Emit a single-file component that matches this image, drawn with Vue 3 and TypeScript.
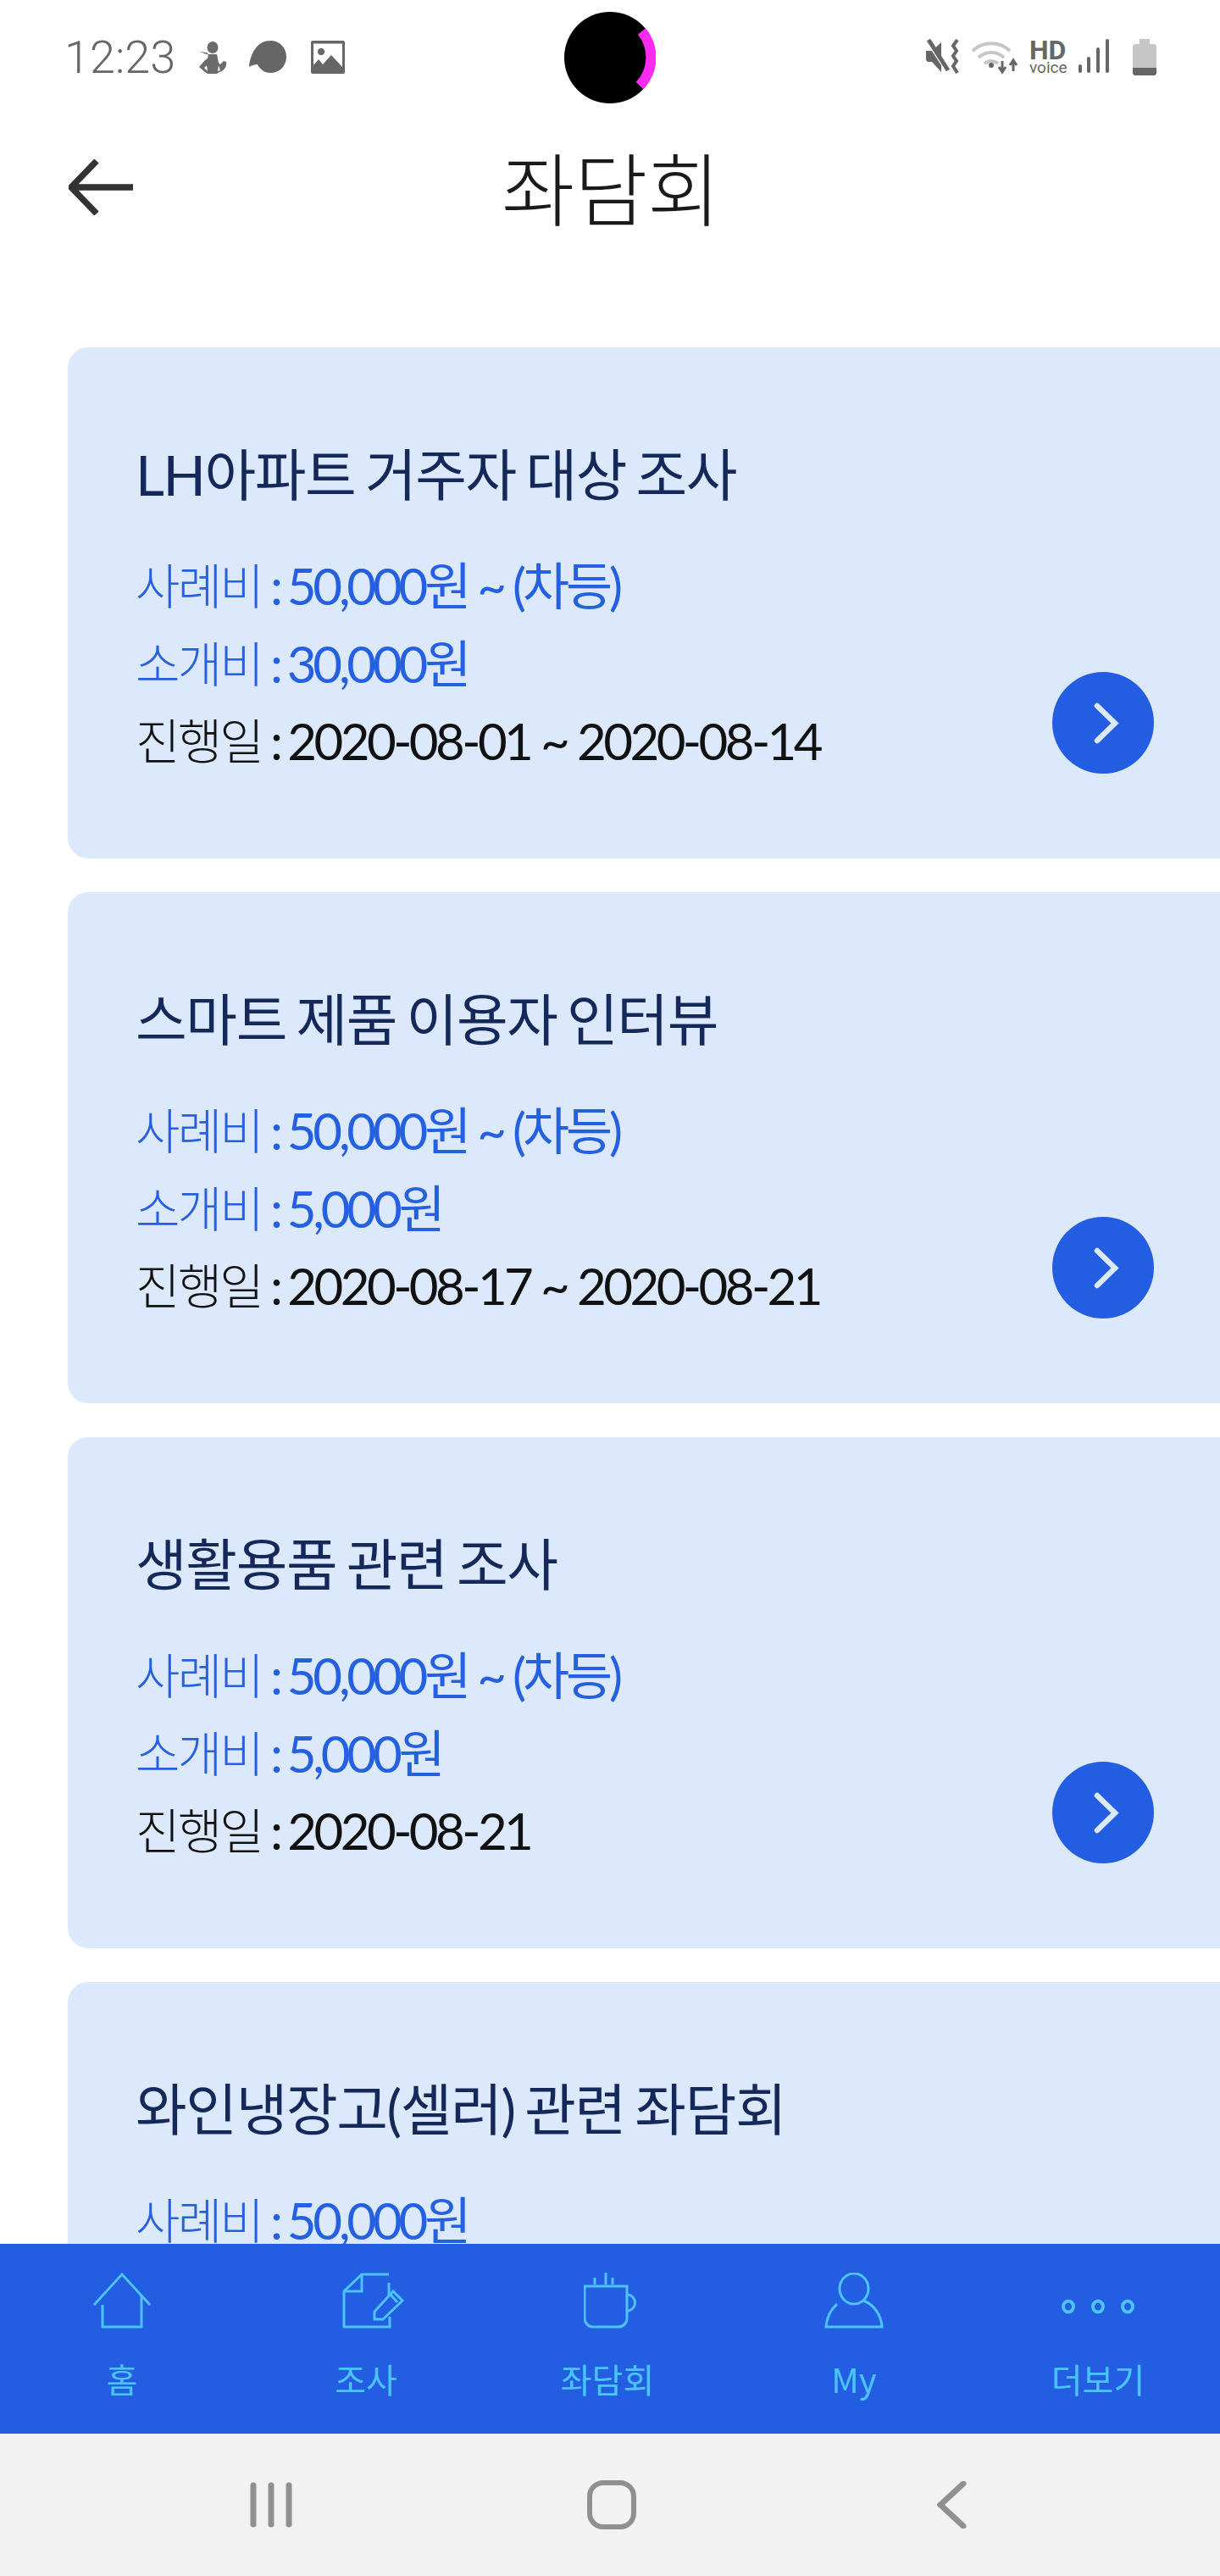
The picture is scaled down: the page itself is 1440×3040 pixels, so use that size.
<script setup lang="ts">
interface Row {
  label: string;
  value: string;
  dark?: boolean;
}

interface Meeting {
  title: string;
  rows: Row[];
}

const meetings: Meeting[] = [
  {
    title: 'LH아파트 거주자 대상 조사',
    rows: [
      { label: '사례비', value: '50,000원 ~ (차등)' },
      { label: '소개비', value: '30,000원' },
      { label: '진행일', value: '2020-08-01 ~ 2020-08-14', dark: true },
    ],
  },
  {
    title: '스마트 제품 이용자 인터뷰',
    rows: [
      { label: '사례비', value: '50,000원 ~ (차등)' },
      { label: '소개비', value: '5,000원' },
      { label: '진행일', value: '2020-08-17 ~ 2020-08-21', dark: true },
    ],
  },
  {
    title: '생활용품 관련 조사',
    rows: [
      { label: '사례비', value: '50,000원 ~ (차등)' },
      { label: '소개비', value: '5,000원' },
      { label: '진행일', value: '2020-08-21', dark: true },
    ],
  },
  {
    title: '와인냉장고(셀러) 관련 좌담회',
    rows: [{ label: '사례비', value: '50,000원' }],
  },
];
</script>

<template>
  <div class="phone">
    <div class="status-bar">
      <div class="status-left">
        <span class="clock">12:23</span>
        <svg class="st-person" width="36" height="40" viewBox="0 0 36 40">
          <ellipse cx="18" cy="7" rx="6.5" ry="7" fill="#6b6b6b" />
          <path d="M2 12l12 4-3-3z" fill="#6b6b6b" />
          <path d="M13 15h10l2 10 2 2 4-4 3 1c1 6-3 11-8 12l-3 2H12l-3-2-7-6 7-8 3-2z" fill="#6b6b6b" />
          <path d="M11 28l-3 3 4 4zM25 28l2 6-3 1z" fill="#fff" />
        </svg>
        <svg class="st-bubble" width="44" height="38" viewBox="0 0 44 38">
          <path d="M0 31C1 18 8 0 25 0c11 0 19 8 19 19s-8 19-19 19c-7 0-12-4-15-10-3 0-7 1-10 3z" fill="#666" />
        </svg>
        <svg class="st-image" width="40" height="39" viewBox="0 0 40 39">
          <rect width="40" height="39" rx="2" fill="#666" />
          <rect x="3" y="3.500" width="34" height="32" fill="#fff" />
          <circle cx="12" cy="13" r="4" fill="#666" />
          <path d="M3 29l6-7 5 6 10-11 13 14v8H3z" fill="#666" />
        </svg>
      </div>
      <div class="status-right">
        <svg width="41" height="41" viewBox="0 0 41 41">
          <path d="M0 14h7L18 4v35L7 27H2l-2-2z" fill="#666" />
          <path d="M2 2l24 37" stroke="#fff" stroke-width="5" />
          <path d="M3 1l23 36" stroke="#666" stroke-width="5" />
          <path d="M37 1l-5 7 4 6-4 6 4 6-4 6 5 8" fill="none" stroke="#666" stroke-width="4" />
        </svg>
        <svg width="57" height="42" viewBox="0 0 57 42">
          <g fill="none" stroke="#c6c6c6" stroke-width="4">
            <path d="M2 14a32 32 0 0 1 44 0" />
            <path d="M9 22a22 22 0 0 1 30 0" />
            <path d="M16 29a12 12 0 0 1 16 0" />
          </g>
          <circle cx="24" cy="31" r="3" fill="#666" />
          <path d="M37 26v10M33 33l4 6 4-6M50 38V28M46 31l4-6 4 6" fill="none" stroke="#666" stroke-width="3" />
        </svg>
        <div class="hd">
          <span class="hd-big">HD</span>
          <span class="hd-small">voice</span>
        </div>
        <svg width="36" height="40" viewBox="0 0 36 40">
          <g fill="#666">
            <rect x="0" y="30" width="4" height="10" rx="2" />
            <rect x="10" y="21" width="4" height="19" rx="2" />
            <rect x="21" y="10" width="4" height="30" rx="2" />
            <rect x="32" y="0" width="4" height="40" rx="2" />
          </g>
        </svg>
        <svg class="st-battery" width="28" height="43" viewBox="0 0 28 43">
          <path d="M8 0h12v6h6l2 2v27H0V8l2-2h6z" fill="#c6c6c6" />
          <path d="M0 34h28v7l-2 2H2l-2-2z" fill="#666" />
        </svg>
      </div>
      <svg class="camera" width="108" height="108" viewBox="0 0 108 108">
        <circle cx="54" cy="54" r="54" fill="#000" />
        <path d="M91.500 23A48.500 48.500 0 0 1 89 87" fill="none" stroke="#ff2bf0" stroke-width="12" />
      </svg>
    </div>

    <header class="top-bar">
      <svg class="back" width="80" height="66" viewBox="0 0 80 66">
        <path d="M33 2L3 33l30 31M4 33h72" fill="none" stroke="#333" stroke-width="7.500" />
      </svg>
      <h1 class="page-title">좌담회</h1>
    </header>

    <main class="list">
      <section v-for="m in meetings" :key="m.title" class="card">
        <div class="card-text">
          <h2 class="card-title">{{ m.title }}</h2>
          <p v-for="r in m.rows" :key="r.label" class="row" :class="{ dark: r.dark }">
            <span class="row-label">{{ r.label }}</span><span class="row-colon">:</span><span class="row-value">{{ r.value }}</span>
          </p>
        </div>
        <button class="go" type="button" aria-label="상세">
          <svg width="120" height="120" viewBox="0 0 120 120">
            <path d="M53 40l21 20.500L53 81" fill="none" stroke="#dce9fd" stroke-width="6.500" stroke-linecap="round" />
          </svg>
        </button>
      </section>
    </main>

    <nav class="tabs">
      <div class="tab">
        <svg class="tab-icon" width="70" height="66" viewBox="0 0 70 66">
          <path d="M2 38L35 2l33 36" fill="none" stroke="#4cc4fb" stroke-width="3" />
          <path d="M12 38v26h46V27" fill="none" stroke="#4cc4fb" stroke-width="3" />
        </svg>
        <span>홈</span>
      </div>
      <div class="tab">
        <svg class="tab-icon survey-icon" width="74" height="66" viewBox="0 0 74 66">
          <g fill="none" stroke="#4cc4fb" stroke-width="3">
            <path d="M55 2H23L2 22v42h54V52" />
            <path d="M23 2v20H2" />
            <path d="M55 12v16" />
            <path d="M38 46l22-24 11 11-23 22H38z" />
            <path d="M57 26l8 9" />
          </g>
        </svg>
        <span>조사</span>
      </div>
      <div class="tab">
        <svg class="tab-icon" width="62" height="66" viewBox="0 0 62 66">
          <g fill="none" stroke="#4cc4fb" stroke-width="3">
            <path d="M1 16h50v38a10 10 0 0 1-10 10H11A10 10 0 0 1 1 54z" />
            <path d="M51 26a9 9 0 0 1 0 19" />
            <path d="M13 6v8M26 0v14M34 6v8" />
          </g>
        </svg>
        <span class="meeting-label">좌담회</span>
      </div>
      <div class="tab">
        <svg class="tab-icon" width="70" height="66" viewBox="0 0 70 66">
          <g fill="none" stroke="#4cc4fb" stroke-width="3">
            <ellipse cx="35" cy="19" rx="17" ry="18" />
            <path d="M15 37C7 44 3 52 2 64h66c-1-14-9-26-22-31" />
          </g>
        </svg>
        <span>My</span>
      </div>
      <div class="tab">
        <svg class="tab-icon" width="88" height="66" viewBox="0 0 88 66">
          <g fill="none" stroke="#4cc4fb" stroke-width="4">
            <ellipse cx="9" cy="40" rx="6" ry="6.500" />
            <ellipse cx="44" cy="40" rx="6" ry="6.500" />
            <ellipse cx="79" cy="40" rx="6" ry="6.500" />
          </g>
        </svg>
        <span>더보기</span>
      </div>
    </nav>

    <footer class="system-nav">
      <svg width="50" height="54" viewBox="0 0 50 54">
        <path d="M4 4v46M25 4v46M46 4v46" stroke="#909090" stroke-width="7" stroke-linecap="round" />
      </svg>
      <svg width="58" height="58" viewBox="0 0 58 58">
        <rect x="3" y="3" width="52" height="52" rx="16" fill="none" stroke="#909090" stroke-width="6" />
      </svg>
      <svg width="36" height="56" viewBox="0 0 36 56">
        <path d="M31 3L4 28l27 25" fill="none" stroke="#909090" stroke-width="7" stroke-linecap="round" />
      </svg>
    </footer>
  </div>
</template>

<style>
html,
body {
  margin: 0;
  background: #fff;
  overflow: hidden;
}
</style>

<style scoped>
.phone {
  width: 1440px;
  height: 3040px;
  display: flex;
  flex-direction: column;
  overflow: hidden;
  background: #fff;
  font-family: Lato, "Noto Sans CJK KR", sans-serif;
}
.status-bar {
  position: relative;
  flex: none;
  height: 136px;
  display: flex;
  justify-content: space-between;
  padding: 46px 75px 0 76px;
  box-sizing: border-box;
}
.status-left,
.status-right {
  display: flex;
  align-items: flex-start;
}
.clock {
  font-family: Roboto, sans-serif;
  font-weight: 300;
  font-size: 54px;
  line-height: 44px;
  color: #666;
}
.st-person { margin: 3px 0 0 26px; }
.st-bubble { margin: 2px 0 0 25px; }
.st-image { margin: 2px 0 0 29px; }
.status-right { gap: 12px; }
.hd {
  display: flex;
  flex-direction: column;
  width: 46px;
  font-family: Roboto, sans-serif;
  color: #666;
  line-height: 1;
}
.hd-big {
  font-size: 32px;
  font-weight: 700;
  height: 24px;
  margin-top: 1px;
  line-height: 24px;
}
.hd-small {
  font-size: 19px;
  line-height: 18px;
}
.st-battery { margin-left: 16px; }
.camera {
  position: absolute;
  left: 666px;
  top: 14px;
}
.top-bar {
  position: relative;
  flex: none;
  height: 274px;
  box-sizing: border-box;
  padding: 23px 0 0 2px;
  text-align: center;
}
.back {
  position: absolute;
  left: 81px;
  top: 52px;
}
.page-title {
  margin: 0;
  font-family: "Noto Sans CJK KR", sans-serif;
  font-weight: 300;
  font-size: 94px;
  line-height: 120px;
  letter-spacing: -0.5px;
  color: #1a1a1a;
}
.list {
  flex: 1;
  min-height: 0;
  overflow: hidden;
  padding-left: 80px;
  display: flex;
  flex-direction: column;
  gap: 40px;
}
.card {
  flex: none;
  height: 603px;
  box-sizing: border-box;
  display: flex;
  justify-content: space-between;
  padding: 104px 78px 100px 80px;
  background: #dce9fd;
  border-radius: 24px 0 0 24px;
}
.card-title {
  margin: 0 0 40px;
  font-weight: 400;
  font-size: 66px;
  line-height: 92px;
  letter-spacing: -1.4px;
  word-spacing: -4px;
  color: #14285a;
}
.row {
  margin: 0;
  display: flex;
  font-size: 60px;
  line-height: 91.500px;
  letter-spacing: -4.200px;
  color: #2560e0;
  white-space: pre;
}
.row.dark {
  color: #111;
  letter-spacing: -3.600px;
}
.row-label {
  font-weight: 300;
  font-size: 57px;
  letter-spacing: -2.800px;
}
.row-colon {
  margin: 0 9px 0 10px;
}
.go {
  align-self: flex-end;
  flex: none;
  width: 120px;
  height: 120px;
  padding: 0;
  border: 0;
  border-radius: 50%;
  background: #235de2;
}
.go svg { display: block; }
.tabs {
  flex: none;
  height: 224px;
  display: grid;
  grid-template-columns: repeat(5, 1fr);
  background: #235de2;
}
.tab {
  display: flex;
  flex-direction: column;
  align-items: center;
  padding-top: 34px;
  font-family: "Noto Sans CJK KR", sans-serif;
  font-size: 40px;
  line-height: 50px;
  color: #4cc4fb;
}
.tab-icon {
  display: block;
  margin-bottom: 34px;
}
.survey-icon { margin-left: 18px; }
.meeting-label { margin-right: 6px; }
.system-nav {
  flex: none;
  height: 168px;
  display: grid;
  grid-template-columns: repeat(3, 402px);
  justify-content: center;
  align-items: center;
  justify-items: center;
  padding-left: 4px;
  box-sizing: border-box;
  background: #f2f2f2;
}
</style>
